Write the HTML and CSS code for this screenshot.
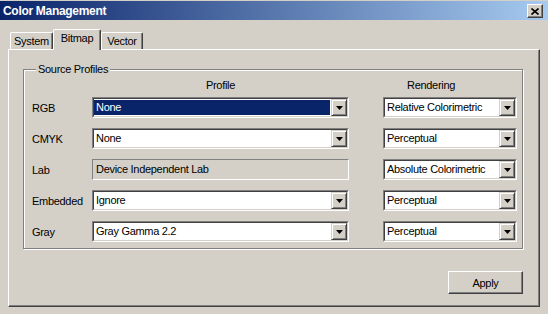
FILE: index.html
```html
<!DOCTYPE html>
<html lang="en">
<head>
<title>Color Management</title>
<meta charset="UTF-8">
<link rel="stylesheet" href="styles.css">
</head>
<body>
  <div class="window">
    <div class="titlebar">
      <span class="title">Color Management</span>
      <button class="close" type="button">
        <svg width="8" height="7" viewBox="0 0 8 7"><path d="M0.5 0.5L7.5 6.5M7.5 0.5L0.5 6.5" stroke="#000" stroke-width="1.6" fill="none"/></svg>
      </button>
    </div>

    <div class="tabs">
      <div class="tab tab-system">System</div>
      <div class="tab tab-bitmap active">Bitmap</div>
      <div class="tab tab-vector">Vector</div>
    </div>

    <div class="panel">
      <fieldset class="group">
        <legend>Source Profiles</legend>

        <div class="cols head">
          <span></span>
          <span class="head-profile">Profile</span>
          <span class="render head-render">Rendering</span>
        </div>

        <div class="cols rows">
          <span class="lbl">RGB</span>
          <div class="combo"><div class="combo-in"><span class="value sel">None</span><span class="arrow"></span></div></div>
          <div class="combo render"><div class="combo-in"><span class="value">Relative Colorimetric</span><span class="arrow"></span></div></div>

          <span class="lbl">CMYK</span>
          <div class="combo"><div class="combo-in"><span class="value">None</span><span class="arrow"></span></div></div>
          <div class="combo render"><div class="combo-in"><span class="value">Perceptual</span><span class="arrow"></span></div></div>

          <span class="lbl">Lab</span>
          <div class="field">Device Independent Lab</div>
          <div class="combo render"><div class="combo-in"><span class="value">Absolute Colorimetric</span><span class="arrow"></span></div></div>

          <span class="lbl">Embedded</span>
          <div class="combo"><div class="combo-in"><span class="value">Ignore</span><span class="arrow"></span></div></div>
          <div class="combo render"><div class="combo-in"><span class="value">Perceptual</span><span class="arrow"></span></div></div>

          <span class="lbl">Gray</span>
          <div class="combo"><div class="combo-in"><span class="value">Gray Gamma 2.2</span><span class="arrow"></span></div></div>
          <div class="combo render"><div class="combo-in"><span class="value">Perceptual</span><span class="arrow"></span></div></div>
        </div>
      </fieldset>

      <div class="actions">
        <button class="btn" type="button">Apply</button>
      </div>
    </div>
  </div>
</body>
</html>
```

FILE: styles.css
```css
body {
    margin: 0;
    background-color: #D4D0C8;
    color: #000000;
    font-family: "Liberation Sans", Arial, sans-serif;
    font-size: 11px;
    letter-spacing: -0.3px;
}
.window {
    width: 548px;
    height: 314px;
    box-sizing: border-box;
    border-top: 1px solid #D4D0C8;
    overflow: hidden;
}
.titlebar {
    height: 19px;
    display: flex;
    align-items: center;
    justify-content: space-between;
    padding: 0 5px 0 3px;
    background: linear-gradient(to right, #0A246A, #A6CAF0);
    color: #FFFFFF;
}
.title {
    font-weight: bold;
    font-size: 12px;
}
.close {
    display: flex;
    align-items: center;
    justify-content: center;
    width: 16px;
    height: 14px;
    padding: 0;
    margin-top: 1px;
    box-sizing: border-box;
    border: 1px solid;
    border-color: #FFFFFF #404040 #404040 #FFFFFF;
    box-shadow: inset -1px -1px 0 #808080;
    background-color: #D4D0C8;
}

/* tabs */
.tabs {
    display: flex;
    align-items: flex-end;
    height: 20px;
    margin-top: 9px;
    padding-left: 10px;
}
.tab {
    height: 17px;
    box-sizing: border-box;
    border-top: 1px solid #FFFFFF;
    border-left: 1px solid #FFFFFF;
    border-right: 1px solid #404040;
    border-radius: 2px 2px 0 0;
    box-shadow: inset -1px 0 0 #808080;
    text-align: center;
    line-height: 17px;
}
.tab-system { width: 43px; }
.tab-bitmap { width: 48px; }
.tab-vector { width: 42px; }
.tab.active {
    position: relative;
    z-index: 1;
    height: 21px;
    margin-bottom: -1px;
    line-height: 16px;
    background-color: #D4D0C8;
}

.panel {
    width: 532px;
    height: 258px;
    margin-left: 8px;
    box-sizing: border-box;
    border: 1px solid;
    border-color: #FFFFFF #404040 #404040 #FFFFFF;
    box-shadow: inset -1px -1px 0 #808080;
    padding-top: 13px;
}

/* group */
.group {
    width: 500px;
    margin: 0 0 0 14px;
    padding: 3px 5px 6px 8px;
    box-sizing: border-box;
    min-width: 0;
    border: 1px solid #808080;
    box-shadow: inset 1px 1px 0 #FFFFFF, 1px 1px 0 #FFFFFF;
}
.group legend {
    padding: 0 2px;
    margin-left: 4px;
    background-color: #D4D0C8;
    line-height: 13px;
}
.cols {
    display: grid;
    grid-template-columns: 60px 257px 168px;
}
.render {
    margin-left: 34px;
}
.head {
    line-height: 13px;
    margin-bottom: 5px;
}
.head-profile { text-align: center; }
.head-render { padding-left: 24px; }
.rows {
    row-gap: 10px;
}
.lbl {
    align-self: center;
}

/* combo box */
.combo {
    height: 21px;
    box-sizing: border-box;
    border: 1px solid;
    border-color: #808080 #FFFFFF #FFFFFF #808080;
}
.combo-in {
    display: flex;
    height: 100%;
    box-sizing: border-box;
    border: 1px solid;
    border-color: #404040 #D4D0C8 #D4D0C8 #404040;
    background-color: #FFFFFF;
}
.value {
    flex: 1;
    padding-left: 2px;
    line-height: 17px;
    white-space: nowrap;
    overflow: hidden;
}
.value.sel {
    margin: 1px 1px 1px 0;
    line-height: 15px;
    background-color: #0A246A;
    color: #FFFFFF;
}
.arrow {
    display: flex;
    align-items: center;
    justify-content: center;
    width: 16px;
    box-sizing: border-box;
    border: 1px solid;
    border-color: #D4D0C8 #404040 #404040 #D4D0C8;
    box-shadow: inset 1px 1px 0 #FFFFFF, inset -1px -1px 0 #808080;
    background-color: #D4D0C8;
}
.arrow::after {
    content: "";
    width: 7px;
    height: 4px;
    margin: 1px 0 0 1px;
    background-color: #000000;
    clip-path: polygon(0 0, 100% 0, 50% 100%);
}
.field {
    height: 21px;
    box-sizing: border-box;
    border: 1px solid;
    border-color: #808080 #FFFFFF #FFFFFF #808080;
    padding-left: 3px;
    line-height: 19px;
}

/* bottom button */
.actions {
    display: flex;
    justify-content: flex-end;
    width: 500px;
    margin: 22px 0 0 14px;
}
.btn {
    width: 75px;
    height: 23px;
    padding: 0;
    border: 1px solid;
    border-color: #FFFFFF #404040 #404040 #FFFFFF;
    box-shadow: inset -1px -1px 0 #808080;
    background-color: #D4D0C8;
    color: #000000;
    font-family: inherit;
    font-size: 11px;
    letter-spacing: -0.3px;
}
```
